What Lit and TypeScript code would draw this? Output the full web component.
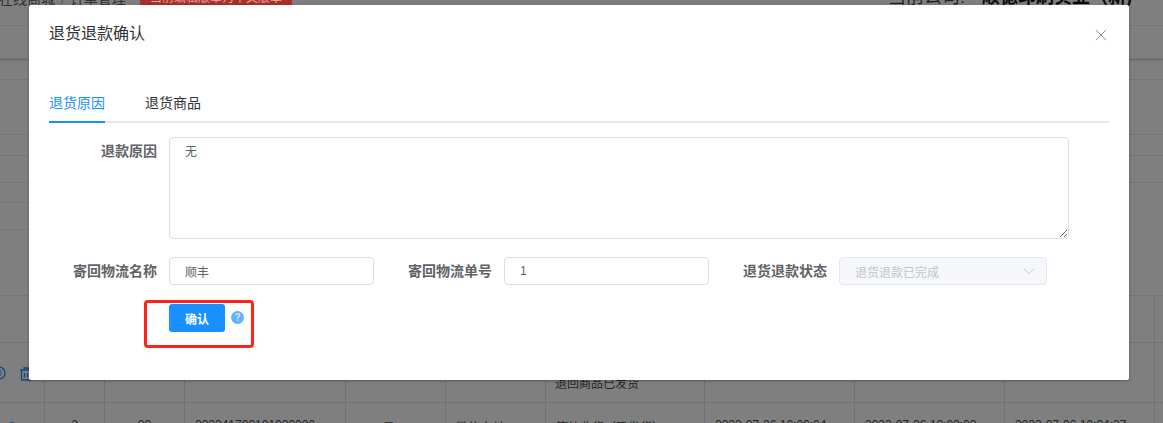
import { LitElement, html, css } from "lit";
import { customElement } from "lit/decorators.js";

const ROW3 = ["", "2", "00", "202341700101000000", "0.01 元", "微信支付", "等待收货（已发货）", "2023-07-06 10:00:04", "2023-07-06 10:00:00", "2023-07-06 10:04:37", ""];

@customElement("app-root")
export class AppRoot extends LitElement {
  static styles = css`
    :host {
      display: block;
      position: relative;
      width: 1163px;
      height: 423px;
      overflow: hidden;
      background: #fff;
      font-family: "Liberation Sans", "Noto Sans CJK SC", sans-serif;
      font-size: 14px;
      color: #606266;
    }
    * { box-sizing: border-box; }

    /* page behind the dialog */
    .topbar { display: flex; align-items: flex-start; height: 26px; border-bottom: 1px solid #f0f0f0; white-space: nowrap; }
    .crumbs { margin: -11px 0 0 -1px; line-height: 20px; color: #5a5e66; width: 141px; flex: none; }
    .crumbs .sep { margin: 0 1px 0 2px; color: #97a8be; }
    .tag { position: relative; z-index: 2; flex: none; width: 152px; height: 14px; margin-top: -9px; background: #a92f2a; color: #dca9a6; font-size: 12px; line-height: 14px; text-align: center; }
    .company { flex: none; margin: -15px 0 0 596px; font-size: 18px; line-height: 24px; color: #444; }
    .company b { margin-left: 17px; color: #111; }
    .line { border-bottom: 1px solid #e6ebf5; }
    .h32 { height: 33px; box-shadow: 0 1px 2px rgba(0,0,0,.25); }
    .h21 { height: 21px; }
    .h55 { height: 55px; }
    .h27 { height: 27px; }
    .h20 { height: 20px; }
    .short { width: 29px; }
    .h66 { height: 66px; }
    .grid { display: grid; grid-template-columns: 45px 60px 80px 161px 100px 100px 159px 150px 150px 150px 1fr; }
    .cell { border-right: 1px solid #dfe6ec; border-bottom: 1px solid #dfe6ec; font-size: 12px; white-space: nowrap; overflow: hidden; color: #4a4a4a; }
    .cell:nth-child(11n) { border-right: none; }
    .r1 { height: 47px; }
    .r2 { height: 60px; }
    .r3 { height: 40px; padding: 15px 0 0 10px; }
    .r3.mid { padding-left: 0; text-align: center; }
    .note { padding: 34px 0 0 9px; line-height: 14px; }
    .ops { display: flex; align-items: flex-start; gap: 14px; margin: 23px 0 0 -8px; color: #1890ff; }
    .ops .trash { margin-top: 1px; }
    .cell.first3 { padding: 19px 0 0 0; }
    .cell.first3 svg { margin-left: 9px; display: block; }

    .overlay { position: absolute; inset: 0; background: rgba(0,0,0,.5); z-index: 1; }

    /* dialog */
    .modal { position: absolute; z-index: 3; left: 29px; top: 5px; width: 1100px; height: 375px; padding: 0 20px; background: #fff; border-radius: 2px; box-shadow: 0 1px 3px rgba(0,0,0,.3); }
    .head { display: flex; justify-content: space-between; height: 78px; padding-top: 17px; }
    .title { font-size: 16px; line-height: 24px; color: #303133; }
    .close { width: 12px; height: 12px; margin: 7px 2px 0 0; color: #909399; display: block; }
    .tabs { display: flex; gap: 40px; height: 40px; border-bottom: 2px solid #e4e7ed; }
    .tab { height: 40px; line-height: 40px; color: #303133; }
    .tab.on { color: #1890ff; border-bottom: 2px solid #1890ff; }
    .row { display: flex; gap: 10px; }
    .r-area { margin-top: 14px; }
    .r-inp { margin-top: 18px; }
    .item { display: flex; }
    .lab { width: 120px; flex: none; padding-right: 12px; text-align: right; font-weight: 700; line-height: 28px; color: #606266; }
    textarea, input { display: block; font: inherit; font-size: 12px; color: #606266; background: #fff; border: 1px solid #dcdfe6; border-radius: 4px; outline: none; }
    textarea { width: 900px; height: 102px; padding: 5px 15px; line-height: 18px; margin: 0; }
    input { width: 205px; height: 28px; padding: 0 15px; margin: 0; }
    .sel { display: flex; align-items: center; justify-content: space-between; width: 208px; height: 28px; padding: 0 11px 0 15px; font-size: 12px; color: #c0c4cc; background: #f5f7fa; border: 1px solid #e4e7ed; border-radius: 4px; }
    .sel svg { width: 12px; height: 12px; display: block; }
    .actions { position: relative; display: flex; margin: 19px 0 0 120px; }
    .btn { width: 56px; height: 28px; border: 0; border-radius: 3px; padding: 0; font: inherit; font-size: 12px; font-weight: 700; color: #fff; background: #1890ff; }
    .help { display: block; width: 13px; height: 13px; margin: 7px 0 0 6px; }
    .mark { position: absolute; left: -25px; top: -4px; width: 110px; height: 48px; border: 3px solid #ff2418; border-radius: 4px; pointer-events: none; }
  `;

  render() {
    const r1 = ROW3.map(() => html`<div class="cell r1"></div>`);
    return html`
      <div class="topbar">
        <div class="crumbs">在线商城<span class="sep"> / </span>订单管理</div>
        <div class="tag">当前编辑版本为中文版本</div>
        <div class="company">当前公司:<b>顺德印刷实业（新)</b></div>
      </div>
      <div class="line h32"></div>
      <div class="line h21"></div>
      <div class="line h55"></div>
      <div class="line h21"></div>
      <div class="line h27"></div>
      <div class="line h20 short"></div>
      <div class="line h27 short"></div>
      <div class="h66 line"></div>
      <div class="grid">
        ${r1}
        <div class="cell r2">
          <div class="ops">
            <svg width="14" height="14" viewBox="0 0 14 14" fill="none" stroke="currentColor" stroke-width="1.2"><circle cx="7" cy="7" r="6"/><path d="M4.5 5h5M4.5 7h5M4.5 9h5"/></svg>
            <svg class="trash" width="12" height="14" viewBox="0 0 12 14" fill="none" stroke="currentColor" stroke-width="1.3"><path d="M0 3h12M4 3V1h4v2M1.5 3v10h9V3M4.5 6v4.5M7.5 6v4.5"/></svg>
          </div>
        </div>
        <div class="cell r2"></div><div class="cell r2"></div><div class="cell r2"></div><div class="cell r2"></div><div class="cell r2"></div>
        <div class="cell r2 note">退回商品已发货</div>
        <div class="cell r2"></div><div class="cell r2"></div><div class="cell r2"></div><div class="cell r2"></div>
        ${ROW3.map((t, i) => i === 0
          ? html`<div class="cell r3 first3"><svg width="6" height="6" viewBox="0 0 6 6" fill="#1890ff"><circle cx="3" cy="3" r="3"/></svg></div>`
          : html`<div class="cell r3 ${i < 3 ? "mid" : ""}">${t}</div>`)}
      </div>
      <div class="overlay"></div>

      <div class="modal">
        <div class="head">
          <div class="title">退货退款确认</div>
          <svg class="close" viewBox="0 0 12 12" fill="none" stroke="currentColor" stroke-width="1"><path d="M.8.8l10.4 10.4M11.2.8L.8 11.2"/></svg>
        </div>
        <div class="tabs">
          <div class="tab on">退货原因</div>
          <div class="tab">退货商品</div>
        </div>
        <div class="row r-area">
          <div class="item">
            <div class="lab">退款原因</div>
            <textarea .value=${"无"}></textarea>
          </div>
        </div>
        <div class="row r-inp">
          <div class="item"><div class="lab">寄回物流名称</div><input .value=${"顺丰"} /></div>
          <div class="item"><div class="lab">寄回物流单号</div><input .value=${"1"} /></div>
          <div class="item">
            <div class="lab">退货退款状态</div>
            <div class="sel">
              <span>退货退款已完成</span>
              <svg viewBox="0 0 12 12" fill="none" stroke="#c0c4cc" stroke-width="1"><path d="M.8 3.5L6 8.7l5.2-5.2"/></svg>
            </div>
          </div>
        </div>
        <div class="actions">
          <button class="btn">确认</button>
          <svg class="help" viewBox="0 0 13 13"><circle cx="6.5" cy="6.5" r="6.5" fill="#66b1ff"/><text x="6.5" y="10" text-anchor="middle" font-size="10" font-weight="700" fill="#cfe5fd" font-family="Liberation Sans">?</text></svg>
          <div class="mark"></div>
        </div>
      </div>
    `;
  }
}
